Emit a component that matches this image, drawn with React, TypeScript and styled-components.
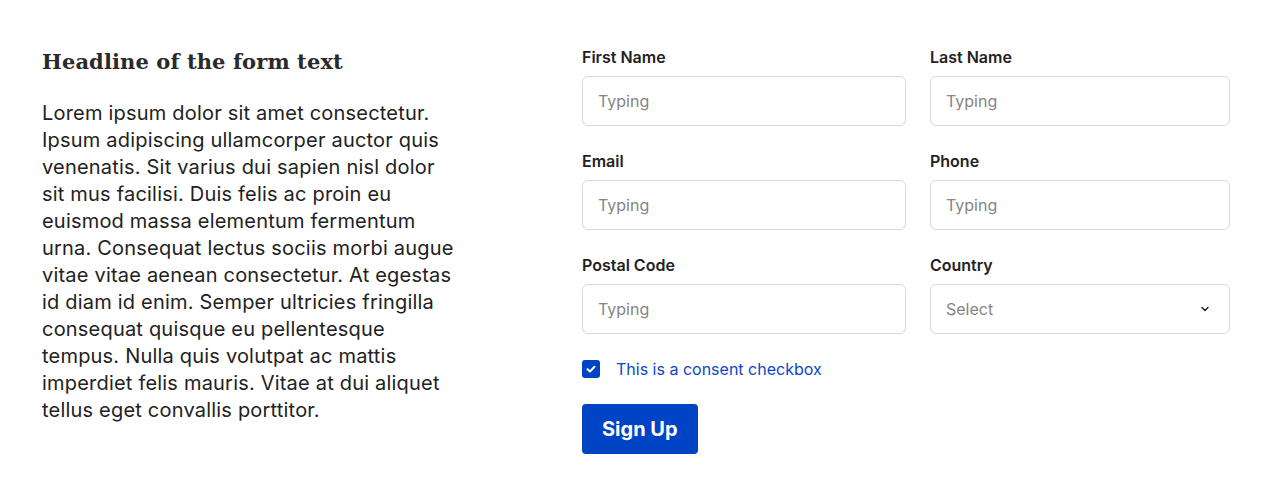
import React from 'react';
import styled, { createGlobalStyle } from 'styled-components';

const GlobalStyle = createGlobalStyle`
    body {
        margin: 0;
        background: #fff;
        font-family: Inter, "Noto Sans", sans-serif;
        color: #222;
    }
`;

const fields = [
    { label: 'First Name' },
    { label: 'Last Name' },
    { label: 'Email' },
    { label: 'Phone' },
    { label: 'Postal Code' },
    { label: 'Country', select: true },
];

const App: React.FC = () => {
    return (
        <>
            <GlobalStyle />
            <StyledPage>
                <StyledIntro>
                    <StyledHeadline>Headline of the form text</StyledHeadline>
                    <StyledBody>
                        Lorem ipsum dolor sit amet consectetur. Ipsum adipiscing ullamcorper auctor quis
                        venenatis. Sit varius dui sapien nisl dolor sit mus facilisi. Duis felis ac proin eu
                        euismod massa elementum fermentum urna. Consequat lectus sociis morbi augue vitae
                        vitae aenean consectetur. At egestas id diam id enim. Semper ultricies fringilla
                        consequat quisque eu pellentesque tempus. Nulla quis volutpat ac mattis imperdiet
                        felis mauris. Vitae at dui aliquet tellus eget convallis porttitor.
                    </StyledBody>
                </StyledIntro>

                <StyledForm onSubmit={(e) => e.preventDefault()}>
                    <StyledGrid>
                        {fields.map((f) => (
                            <StyledField key={f.label}>
                                <StyledLabel>{f.label}</StyledLabel>
                                {f.select ? (
                                    <StyledSelect>
                                        <span>Select</span>
                                        <svg width="12" height="12" viewBox="0 0 12 12" fill="none">
                                            <path d="M3 4.5L6 7.5L9 4.5" stroke="#222" strokeWidth="1.5" strokeLinecap="round" strokeLinejoin="round" />
                                        </svg>
                                    </StyledSelect>
                                ) : (
                                    <StyledInput placeholder="Typing" />
                                )}
                            </StyledField>
                        ))}
                    </StyledGrid>

                    <StyledConsent>
                        <StyledCheck>
                            <svg width="12" height="12" viewBox="0 0 12 12" fill="none">
                                <path d="M2.5 6.2L5 8.5L9.5 3.8" stroke="#fff" strokeWidth="2" strokeLinecap="round" strokeLinejoin="round" />
                            </svg>
                        </StyledCheck>
                        This is a consent checkbox
                    </StyledConsent>

                    <StyledButton type="submit">Sign Up</StyledButton>
                </StyledForm>
            </StyledPage>
        </>
    );
};

export default App;

const StyledPage = styled.div`
    display: flex;
    gap: 124px;
    padding: 48px 42px;
    box-sizing: border-box;
`;

const StyledIntro = styled.div`
    width: 416px;
    flex-shrink: 0;
`;

const StyledHeadline = styled.h1`
    margin: 0;
    font-family: "DejaVu Serif", "Liberation Serif", serif;
    font-size: 21px;
    font-weight: 700;
    line-height: 28px;
    letter-spacing: 0.1px;
    color: #2a2a2a;
`;

const StyledBody = styled.p`
    margin: 24px 0 0;
    font-size: 20px;
    line-height: 27px;
    letter-spacing: 0.2px;
    color: #222;
`;

const StyledForm = styled.form`
    display: flex;
    flex-direction: column;
    align-items: flex-start;
    gap: 26px;
`;

const StyledGrid = styled.div`
    display: grid;
    grid-template-columns: 324px 300px;
    column-gap: 24px;
    row-gap: 26px;
`;

const StyledField = styled.div`
    display: flex;
    flex-direction: column;
    gap: 10px;
`;

const StyledLabel = styled.label`
    font-size: 16px;
    font-weight: 600;
    line-height: 18px;
    color: #222;
`;

const StyledInput = styled.input`
    box-sizing: border-box;
    height: 50px;
    width: 100%;
    padding: 0 15px;
    border: 1px solid #d9d9d9;
    border-radius: 6px;
    font-family: Inter, sans-serif;
    font-size: 16px;
    color: #222;
    outline: none;

    &::placeholder {
        color: #858585;
    }
`;

const StyledSelect = styled.div`
    box-sizing: border-box;
    height: 50px;
    display: flex;
    align-items: center;
    justify-content: space-between;
    padding: 0 18px 0 15px;
    border: 1px solid #d9d9d9;
    border-radius: 6px;
    font-size: 16px;
    color: #858585;
`;

const StyledConsent = styled.label`
    display: flex;
    align-items: center;
    gap: 16px;
    height: 18px;
    font-size: 16px;
    color: #0a47c7;
`;

const StyledCheck = styled.span`
    width: 18px;
    height: 18px;
    border-radius: 3px;
    background: #0044c6;
    display: flex;
    align-items: center;
    justify-content: center;
`;

const StyledButton = styled.button`
    height: 50px;
    padding: 0 20px;
    border: none;
    border-radius: 4px;
    background: #0044c6;
    color: #fff;
    font-family: Inter, sans-serif;
    font-size: 20px;
    font-weight: 700;
    cursor: pointer;
`;
